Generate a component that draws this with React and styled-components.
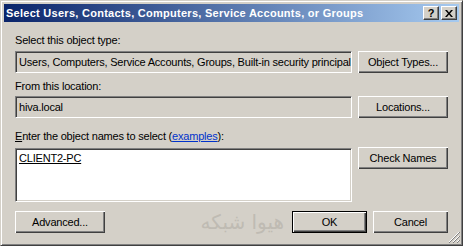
import React from 'react'
import styled, { createGlobalStyle } from 'styled-components'

const Global = createGlobalStyle`
html, body {
    margin: 0;
    padding: 0;
    background: #d4d0c8;
}
body {
    font-family: "Liberation Sans", Arial, sans-serif;
    font-size: 11px;
    letter-spacing: -0.2px;
    color: #000;
}
`

const Window = styled.div`
width: 463px;
height: 246px;
box-sizing: border-box;
background: #d4d0c8;
border-top: 1px solid #d4d0c8;
border-left: 1px solid #d4d0c8;
border-right: 1px solid #404040;
border-bottom: 1px solid #404040;
box-shadow: inset 1px 1px 0 #fff, inset -1px -1px 0 #808080;
padding: 3px;
display: flex;
flex-direction: column;
position: relative;
`

const TitleBar = styled.div`
height: 18px;
display: flex;
align-items: center;
justify-content: space-between;
padding: 0 2px 0 2px;
background: linear-gradient(to right, #0a246a, #a6caf0);
`

const Caption = styled.span`
color: #fff;
font-weight: bold;
font-size: 11px;
letter-spacing: 0.27px;
white-space: nowrap;
`

const Controls = styled.div`
display: flex;
gap: 2px;
`

const CtrlButton = styled.div`
width: 16px;
height: 14px;
box-sizing: border-box;
background: #d4d0c8;
border-top: 1px solid #fff;
border-left: 1px solid #fff;
border-right: 1px solid #404040;
border-bottom: 1px solid #404040;
box-shadow: inset -1px -1px 0 #808080;
display: flex;
align-items: center;
justify-content: center;
font-weight: bold;
font-size: 11px;
letter-spacing: 0;
line-height: 1;
svg { display: block; }
`

const Body = styled.div`
flex: 1;
padding: 6px 10px 0 11px;
display: grid;
grid-template-columns: 337px 90px;
column-gap: 6px;
align-content: start;
`

const Label = styled.div`
grid-column: 1 / 3;
height: 13px;
line-height: 13px;
margin-top: ${p => p.$top}px;
margin-bottom: ${p => p.$bottom}px;
white-space: nowrap;
`

const Field = styled.div`
height: 22px;
box-sizing: border-box;
background: ${p => (p.$white ? '#fff' : '#d4d0c8')};
border-top: 1px solid #808080;
border-left: 1px solid #808080;
border-right: 1px solid #fff;
border-bottom: 1px solid #fff;
box-shadow: inset 1px 1px 0 #404040, inset -1px -1px 0 #d4d0c8;
padding: 0 3px;
line-height: 20px;
white-space: nowrap;
overflow: hidden;
`

const Area = styled(Field)`
height: 54px;
line-height: 16px;
padding-top: 1px;
`

const Resolved = styled.span`
text-decoration: underline;
`

const Button = styled.div`
height: 22px;
box-sizing: border-box;
width: ${p => p.$w || 90}px;
margin-top: ${p => p.$lift ? -1 : 0}px;
background: #d4d0c8;
border: ${p => (p.$default ? '1px solid #000' : 'none')};
box-shadow: inset 1px 1px 0 #fff, inset -1px -1px 0 #404040, inset -2px -2px 0 #808080;
display: flex;
align-items: center;
justify-content: center;
padding-bottom: 1px;
white-space: nowrap;
align-self: start;
`

const Link = styled.span`
color: #0033cc;
text-decoration: underline;
`

const Accel = styled.span`
text-decoration: underline;
`

const Footer = styled.div`
grid-column: 1 / 3;
margin-top: 9px;
display: flex;
align-items: center;
`

const Watermark = styled.span`
flex: 1;
text-align: right;
padding-right: 8px;
font-family: "DejaVu Sans", sans-serif;
font-size: 20px;
line-height: 22px;
letter-spacing: 0;
color: #bfbbb3;
`

const FooterButtons = styled.div`
display: flex;
gap: 6px;
`

const Grip = styled.svg`
position: absolute;
right: 2px;
bottom: 2px;
`

export default function App() {
    return (
        <>
            <Global />
            <Window>
                <TitleBar>
                    <Caption>Select Users, Contacts, Computers, Service Accounts, or Groups</Caption>
                    <Controls>
                        <CtrlButton>?</CtrlButton>
                        <CtrlButton>
                            <svg width="8" height="7" viewBox="0 0 8 7">
                                <path d="M0 0h2l2 2.5L6 0h2L5 3.5 8 7H6L4 4.5 2 7H0l3-3.5z" fill="#000" />
                            </svg>
                        </CtrlButton>
                    </Controls>
                </TitleBar>
                <Body>
                    <Label $top={6} $bottom={4}>Select this object type:</Label>
                    <Field>Users, Computers, Service Accounts, Groups, Built-in security principal</Field>
                    <Button>Object Types...</Button>

                    <Label $top={7} $bottom={3}>From this location:</Label>
                    <Field>hiva.local</Field>
                    <Button>Locations...</Button>

                    <Label $top={12} $bottom={5}>
                        <Accel>E</Accel>nter the object names to select (<Link>examples</Link>):
                    </Label>
                    <Area $white><Resolved>CLIENT2-PC</Resolved></Area>
                    <Button $lift>Check Names</Button>

                    <Footer>
                        <Button $w={90}>Advanced...</Button>
                        <Watermark>هیوا شبکه</Watermark>
                        <FooterButtons>
                            <Button $w={75} $default>OK</Button>
                            <Button $w={75}>Cancel</Button>
                        </FooterButtons>
                    </Footer>
                </Body>
                <Grip width="12" height="12" viewBox="0 0 12 12">
                    <path d="M11 1L1 11M11 5L5 11M11 9L9 11" stroke="#fff" strokeWidth="1" />
                    <path d="M12 1L1 12M12 5L5 12M12 9L9 12" stroke="#808080" strokeWidth="1" />
                </Grip>
            </Window>
        </>
    )
}
